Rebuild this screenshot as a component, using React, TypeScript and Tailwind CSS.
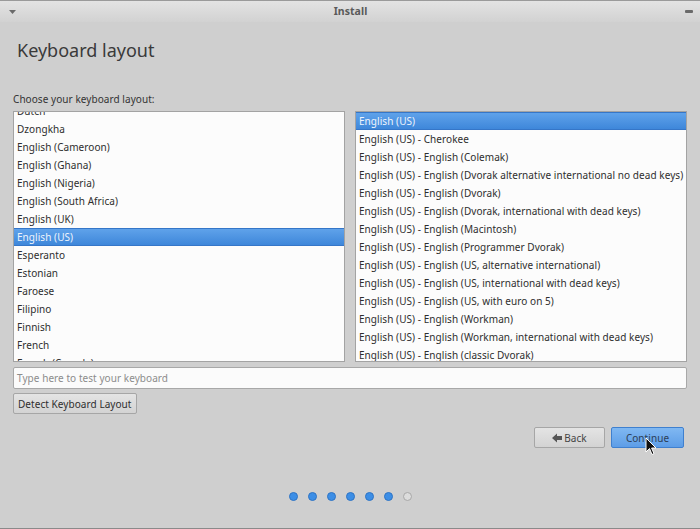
import React from 'react';

const leftItems = [
  'Dutch',
  'Dzongkha',
  'English (Cameroon)',
  'English (Ghana)',
  'English (Nigeria)',
  'English (South Africa)',
  'English (UK)',
  'English (US)',
  'Esperanto',
  'Estonian',
  'Faroese',
  'Filipino',
  'Finnish',
  'French',
  'French (Canada)',
];

const rightItems = [
  'English (US)',
  'English (US) - Cherokee',
  'English (US) - English (Colemak)',
  'English (US) - English (Dvorak alternative international no dead keys)',
  'English (US) - English (Dvorak)',
  'English (US) - English (Dvorak, international with dead keys)',
  'English (US) - English (Macintosh)',
  'English (US) - English (Programmer Dvorak)',
  'English (US) - English (US, alternative international)',
  'English (US) - English (US, international with dead keys)',
  'English (US) - English (US, with euro on 5)',
  'English (US) - English (Workman)',
  'English (US) - English (Workman, international with dead keys)',
  'English (US) - English (classic Dvorak)',
];

const ListBox = ({ items, selected, offset }: { items: string[]; selected: string; offset: string }) => (
  <div className="flex-1 h-[251px] bg-[#fcfcfc] border border-[#a3a3a3] overflow-hidden">
    <div className={offset}>
      {items.map((item) => (
        <div
          key={item}
          className={
            item === selected
              ? 'h-[18px] leading-[17px] pl-[3px] whitespace-nowrap text-[#eef4fc] bg-gradient-to-b from-[#5fa2ea] to-[#3e87da] border-y border-[#3576c8]'
              : 'h-[18px] leading-[18px] pl-[3px] whitespace-nowrap text-[#2e2e2e]'
          }
        >
          {item}
        </div>
      ))}
    </div>
  </div>
);

export default function App() {
  return (
    <div
      className="relative w-[700px] h-[529px] bg-[#cfcfcf] flex flex-col border-b border-[#8a8a8a] text-[10px] tracking-[0.06px]"
      style={{ fontFamily: '"Noto Sans", "Open Sans", sans-serif' }}
    >
      {/* title bar */}
      <div className="h-[22px] border-t border-[#9a9a9a] bg-gradient-to-b from-[#e3e3e3] to-[#d2d2d2] flex items-center justify-between px-[9px]">
        <svg width="7" height="4" viewBox="0 0 7 4">
          <polygon points="0,0 7,0 3.5,4" fill="#6a6a6a" />
        </svg>
        <span className="font-bold text-[#5a5a5a] text-[10.5px]">Install</span>
        <div className="w-[8px] h-[3px] rounded-[1px] bg-[#6a6a6a] mr-[-2px]" />
      </div>

      <div className="flex flex-col px-[13px]">
        <h1 className="ml-[4px] mt-[14px] text-[18px] leading-[28px] text-[#3a3a3a] tracking-normal">Keyboard layout</h1>

        <p className="mt-[27px] leading-[16px] text-[#333]">Choose your keyboard layout:</p>

        <div className="mt-[4px] flex gap-[10px]">
          <ListBox items={leftItems} selected="English (US)" offset="-mt-[10px]" />
          <ListBox items={rightItems} selected="English (US)" offset="mt-0" />
        </div>

        <div className="mt-[5px] h-[22px] bg-[#fbfbfb] border border-[#a8a8a8] rounded-[2px] flex items-center px-[3px] text-[#8c8c8c]">
          Type here to test your keyboard
        </div>

        <div className="mt-[4px] flex">
          <button className="h-[21px] px-[4px] rounded-[2px] border border-[#a6a6a6] bg-gradient-to-b from-[#e4e4e4] to-[#d3d3d3] text-[#2e2e2e] leading-none">
            Detect Keyboard Layout
          </button>
        </div>

        <div className="mt-[13px] mr-[3px] flex justify-end gap-[6px]">
          <button className="w-[71px] h-[21px] rounded-[2px] border border-[#a6a6a6] bg-gradient-to-b from-[#e4e4e4] to-[#d3d3d3] text-[#444] flex items-center justify-center gap-[2px] leading-none">
            <svg width="10" height="10" viewBox="0 0 10 10">
              <polygon points="0,5 5,0.5 5,3 10,3 10,7 5,7 5,9.5" fill="#555" />
            </svg>
            Back
          </button>
          <button className="w-[73px] h-[21px] rounded-[2px] border border-[#3f80cf] bg-gradient-to-b from-[#80b8f2] to-[#5d9de7] text-[#2c3e56] leading-none">
            Continue
          </button>
        </div>
      </div>

      <div className="mt-auto mb-[27px] flex justify-center gap-[10px] pl-[1px]">
        {[0, 1, 2, 3, 4, 5].map((i) => (
          <div key={i} className="w-[9px] h-[9px] rounded-full bg-[#3c8ee6] border border-[#2f74c4]" />
        ))}
        <div className="w-[9px] h-[9px] rounded-full bg-[#dcdcdc] border border-[#a8a8a8]" />
      </div>

      {/* mouse pointer */}
      <svg className="absolute left-[645px] top-[437px]" width="12" height="19" viewBox="0 0 12 19">
        <path d="M1 1 L1 15 L4.5 11.5 L7 17.5 L9 16.6 L6.6 11 L11 11 Z" fill="#111" stroke="#fff" strokeWidth="1" />
      </svg>
    </div>
  );
}
